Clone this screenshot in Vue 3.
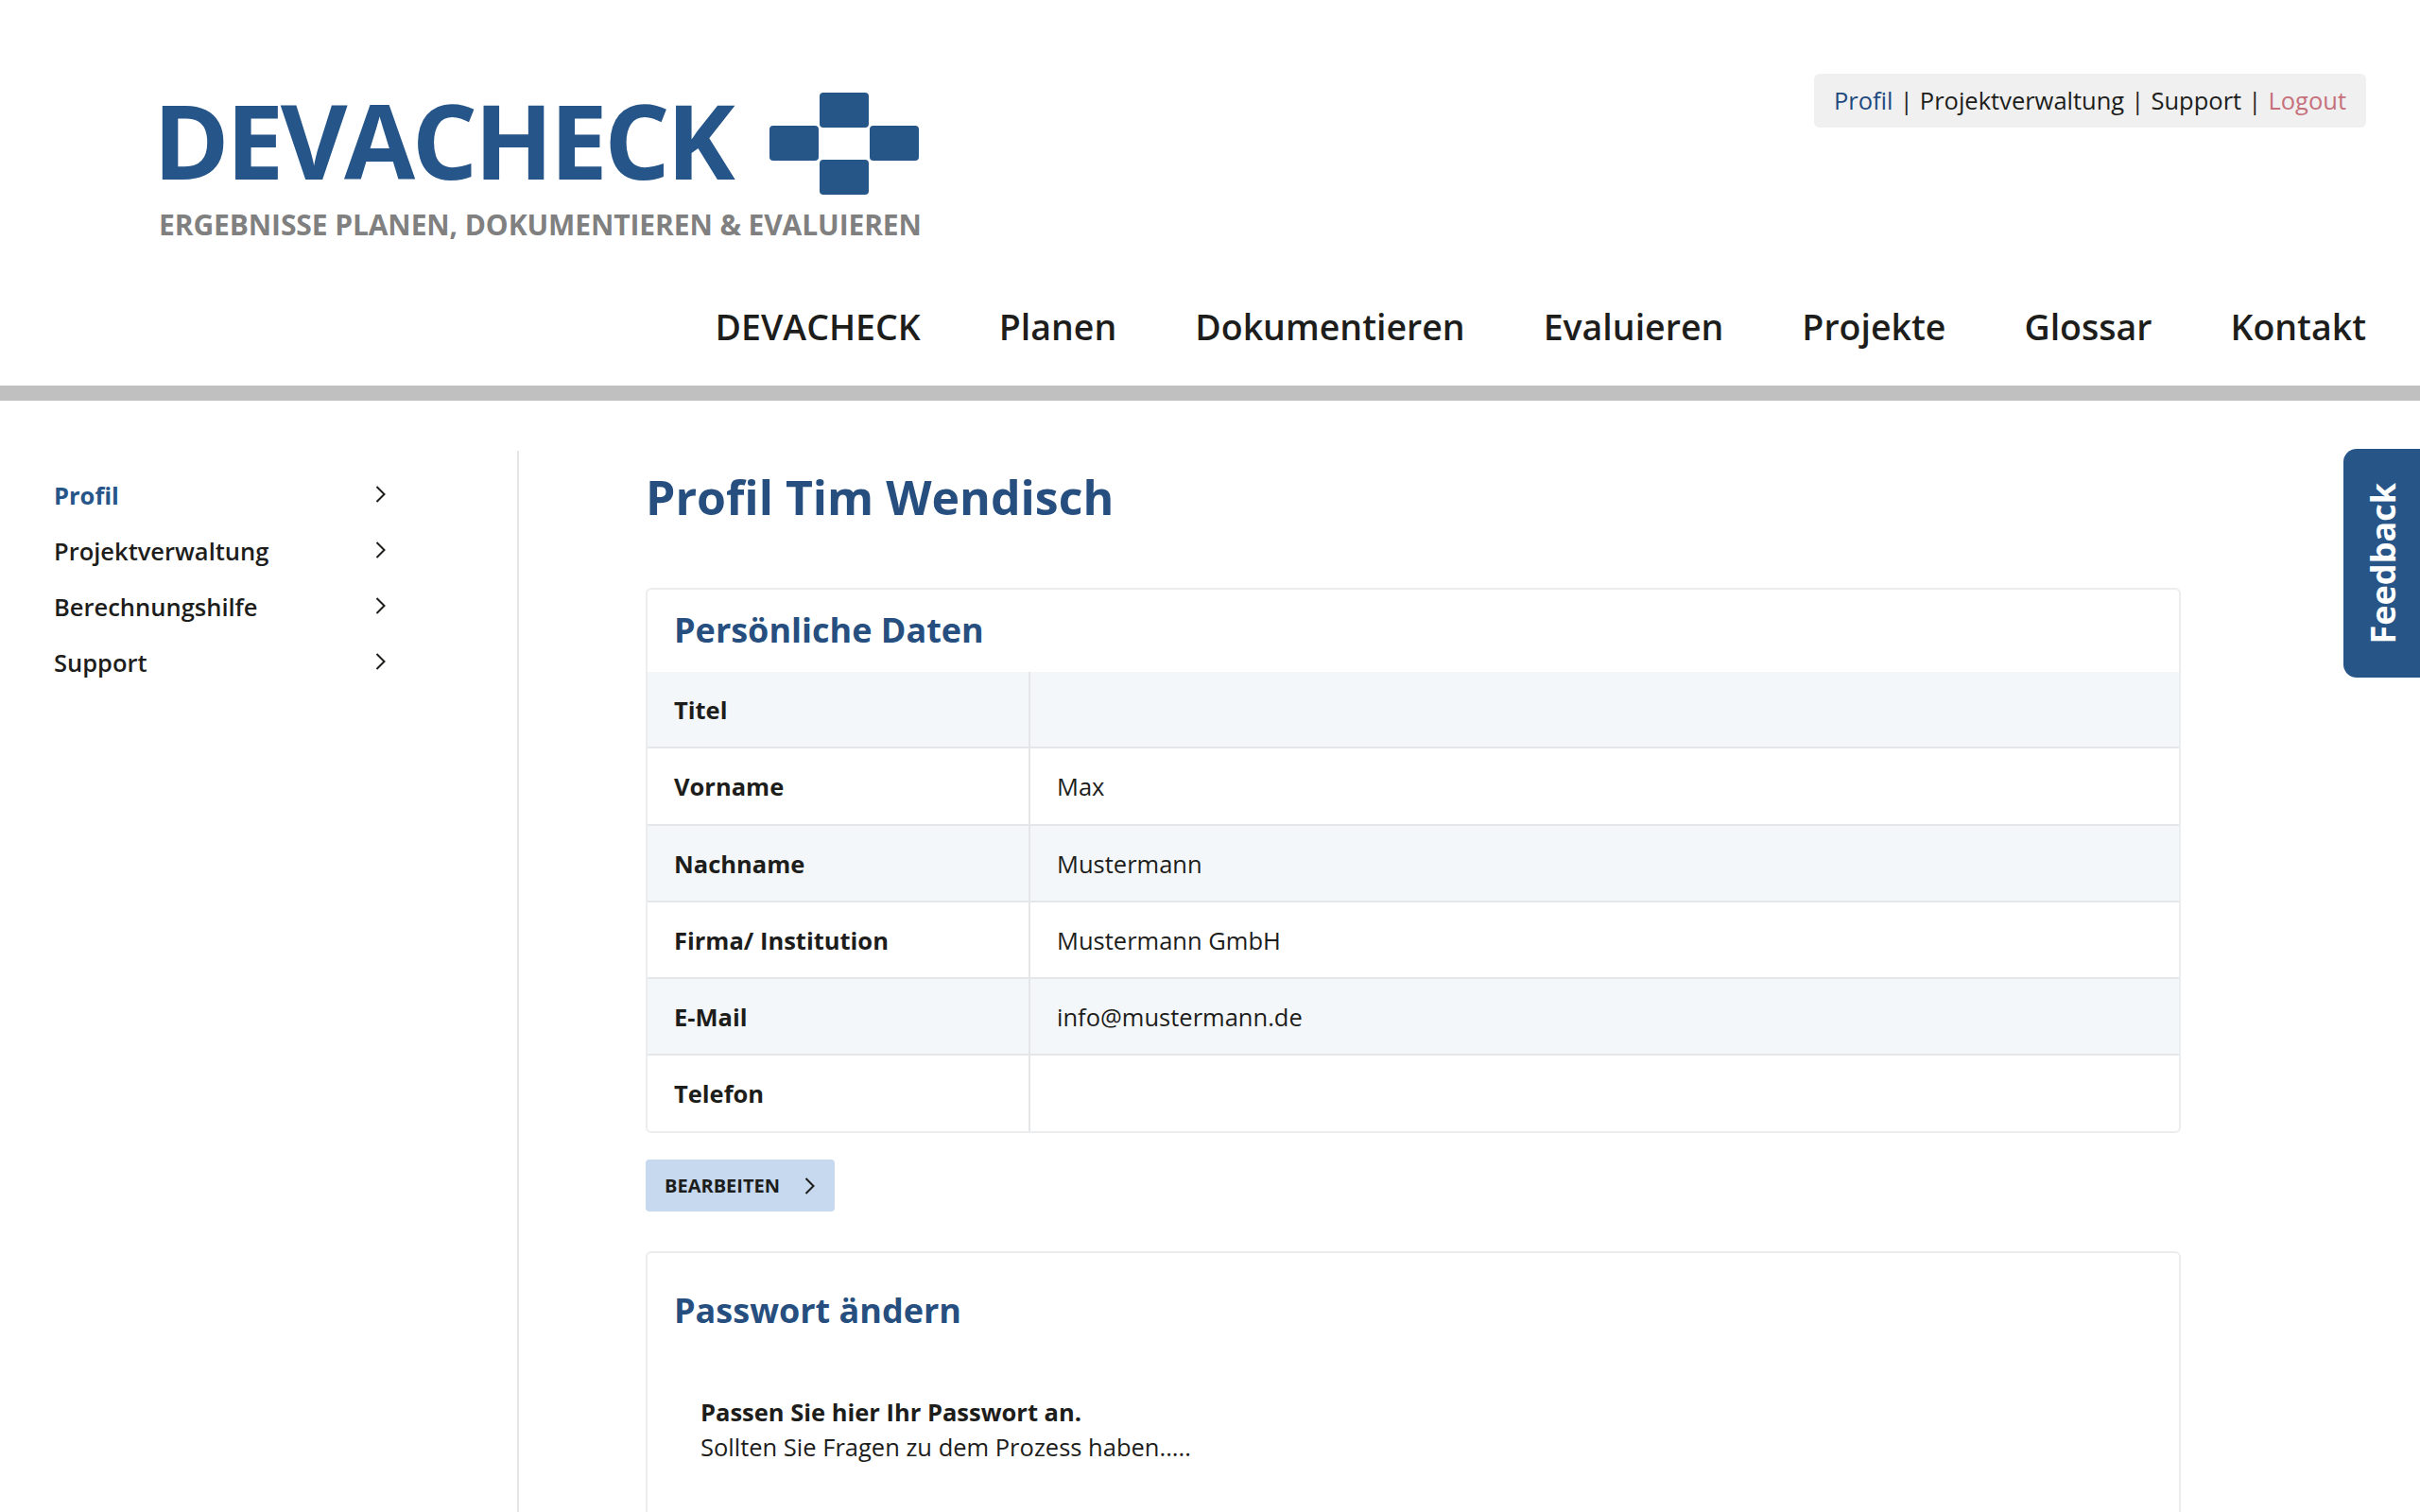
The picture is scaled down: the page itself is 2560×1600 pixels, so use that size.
<template>
  <div class="page">
    <header class="site-header">
      <div class="header-top">
        <div class="logo">
          <div class="logo-row">
            <span class="logo-word">DEVACHECK</span>
            <svg class="logo-mark" width="158" height="110" viewBox="0 0 158 110">
              <rect x="53" y="1" width="52" height="37" rx="4" />
              <rect x="0" y="36" width="52" height="37" rx="4" />
              <rect x="106" y="36" width="52" height="37" rx="4" />
              <rect x="53" y="72" width="52" height="37" rx="4" />
            </svg>
          </div>
          <div class="logo-claim">ERGEBNISSE PLANEN, DOKUMENTIEREN &amp; EVALUIEREN</div>
        </div>
        <div class="meta-nav">
          <a class="meta-profil">Profil</a> | <a>Projektverwaltung</a> | <a>Support</a> | <a class="meta-logout">Logout</a>
        </div>
      </div>
      <nav class="main-nav">
        <a v-for="item in mainNav" :key="item">{{ item }}</a>
      </nav>
    </header>
    <div class="header-bar"></div>

    <div class="content">
      <aside class="sidebar">
        <a v-for="(item, i) in sideNav" :key="item" class="side-link" :class="{ active: i === 0 }">
          <span>{{ item }}</span>
          <svg class="chevron" width="11" height="18" viewBox="0 0 11 18">
            <path d="M1.5 1 L9.5 9 L1.5 17" />
          </svg>
        </a>
      </aside>

      <main class="main">
        <h1>Profil Tim Wendisch</h1>

        <section class="card">
          <h2 class="card-title">Persönliche Daten</h2>
          <div v-for="row in rows" :key="row.label" class="data-row">
            <div class="data-label">{{ row.label }}</div>
            <div class="data-value">{{ row.value }}</div>
          </div>
        </section>

        <button class="edit-btn">
          BEARBEITEN
          <svg class="chevron" width="11" height="18" viewBox="0 0 11 18">
            <path d="M1.5 1 L9.5 9 L1.5 17" />
          </svg>
        </button>

        <section class="card card-password">
          <h2>Passwort ändern</h2>
          <p><strong>Passen Sie hier Ihr Passwort an.</strong><br />Sollten Sie Fragen zu dem Prozess haben.....</p>
        </section>
      </main>
    </div>

    <a class="feedback"><span>Feedback</span></a>
  </div>
</template>

<script setup>
const mainNav = ['DEVACHECK', 'Planen', 'Dokumentieren', 'Evaluieren', 'Projekte', 'Glossar', 'Kontakt']
const sideNav = ['Profil', 'Projektverwaltung', 'Berechnungshilfe', 'Support']
const rows = [
  { label: 'Titel', value: '' },
  { label: 'Vorname', value: 'Max' },
  { label: 'Nachname', value: 'Mustermann' },
  { label: 'Firma/ Institution', value: 'Mustermann GmbH' },
  { label: 'E-Mail', value: 'info@mustermann.de' },
  { label: 'Telefon', value: '' }
]
</script>

<style>
html,
body {
  margin: 0;
  background: #fff;
  overflow: hidden;
}
</style>

<style scoped>
.page {
  position: relative;
  height: 1600px;
  overflow: hidden;
  font-family: 'Open Sans', 'Noto Sans', sans-serif;
  color: #1d1d1b;
  font-size: 25.5px;
}

.site-header {
  height: 408px;
  box-sizing: border-box;
  padding: 78px 57px 0 168px;
}

.header-top {
  display: flex;
  justify-content: space-between;
  align-items: flex-start;
  height: 242px;
}

.logo-row {
  display: flex;
  align-items: flex-start;
  gap: 40px;
  height: 128px;
}

.logo-word {
  font-size: 109px;
  line-height: 112px;
  font-weight: 700;
  color: #255589;
  letter-spacing: -3.5px;
  margin: 14px 0 0 -6px;
  white-space: nowrap;
}

.logo-mark {
  margin-top: 19px;
  fill: #265587;
}

.logo-claim {
  font-size: 30px;
  line-height: 40px;
  font-weight: 700;
  color: #808080;
  letter-spacing: -0.1px;
  white-space: nowrap;
  margin-top: 12px;
}

.meta-nav {
  background: #f0f0f0;
  border-radius: 6px;
  height: 57px;
  line-height: 57px;
  padding: 0 21px;
  box-sizing: border-box;
  white-space: nowrap;
  word-spacing: 0.5px;
}

.meta-profil {
  color: #1f4a80;
}

.meta-logout {
  color: #c6707c;
}

.main-nav {
  display: flex;
  justify-content: flex-end;
  gap: 83px;
  font-size: 37.5px;
  font-weight: 600;
  line-height: 51px;
}

.header-bar {
  height: 16px;
  background: #bfc0bf;
}

.content {
  display: flex;
  padding-top: 53px;
}

.sidebar {
  width: 549px;
  box-sizing: border-box;
  height: 1200px;
  padding: 18px 0 0 57px;
  border-right: 2px solid #e4e6e8;
  flex-shrink: 0;
}

.side-link {
  display: flex;
  justify-content: space-between;
  align-items: center;
  width: 351px;
  height: 58.8px;
  font-weight: 600;
}

.side-link .chevron {
  margin-bottom: 2px;
}

.side-link.active {
  color: #255589;
  font-weight: 700;
}

.chevron {
  fill: none;
  stroke: #1d1d1b;
  stroke-width: 2;
}

.main {
  width: 1624px;
  margin-left: 134px;
  flex-shrink: 0;
}

h1 {
  margin: 0 0 50px;
  padding-top: 3px;
  font-size: 50px;
  line-height: 92px;
  font-weight: 700;
  color: #264f80;
}

.card {
  border: 2px solid #ebedef;
  border-radius: 6px;
  box-sizing: border-box;
}

.card-title,
.card-password h2 {
  margin: 0;
  font-size: 36px;
  font-weight: 700;
  color: #264f80;
}

.card-title {
  height: 87px;
  line-height: 86px;
  padding-left: 28px;
}

.data-row {
  display: flex;
  height: 81.3px;
  box-sizing: border-box;
  border-bottom: 2px solid #e4e6e8;
  line-height: 80px;
}

.data-row:nth-of-type(odd) {
  background: #f4f7fa;
}

.data-row:last-child {
  height: 80px;
  border-bottom: 0;
}

.data-label {
  width: 405px;
  box-sizing: border-box;
  padding-left: 28px;
  font-weight: 700;
  border-right: 2px solid #e4e6e8;
}

.data-value {
  padding-left: 28px;
}

.edit-btn {
  display: flex;
  align-items: center;
  gap: 26px;
  margin: 28px 0 0;
  width: 200px;
  height: 55px;
  padding: 0 0 0 20px;
  border: 0;
  border-radius: 4px;
  background: #c6d9ee;
  color: #1d1d1b;
  font-family: inherit;
  font-size: 20px;
  font-weight: 700;
}

.card-password {
  margin-top: 42px;
  height: 500px;
  padding: 36px 28px;
}

.card-password h2 {
  line-height: 50px;
}

.card-password p {
  margin: 64px 0 0 28px;
  line-height: 37px;
}

.feedback {
  position: absolute;
  top: 475px;
  right: 0;
  width: 81px;
  height: 242px;
  box-sizing: border-box;
  padding-left: 2px;
  background: #275587;
  border-radius: 14px 0 0 14px;
  display: flex;
  align-items: center;
  justify-content: center;
  color: #fff;
  font-size: 36px;
  font-weight: 700;
}

.feedback span {
  writing-mode: vertical-rl;
  transform: rotate(180deg);
}
</style>
